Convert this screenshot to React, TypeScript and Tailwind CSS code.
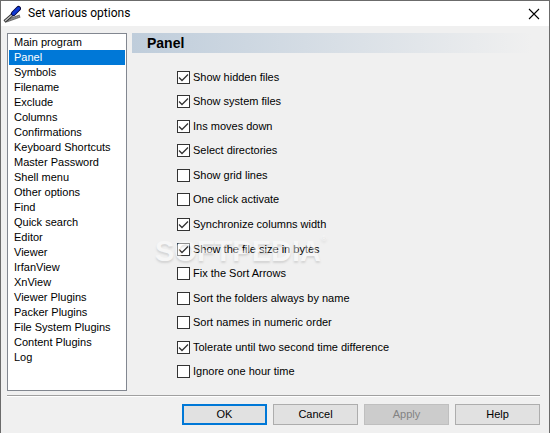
import { useState } from "react";

const PAGES = [
    "Main program",
    "Panel",
    "Symbols",
    "Filename",
    "Exclude",
    "Columns",
    "Confirmations",
    "Keyboard Shortcuts",
    "Master Password",
    "Shell menu",
    "Other options",
    "Find",
    "Quick search",
    "Editor",
    "Viewer",
    "IrfanView",
    "XnView",
    "Viewer Plugins",
    "Packer Plugins",
    "File System Plugins",
    "Content Plugins",
    "Log",
];

const OPTIONS = [
    { label: "Show hidden files", checked: true },
    { label: "Show system files", checked: true },
    { label: "Ins moves down", checked: true },
    { label: "Select directories", checked: true },
    { label: "Show grid lines", checked: false },
    { label: "One click activate", checked: false },
    { label: "Synchronize columns width", checked: true },
    { label: "Show the file size in bytes", checked: true },
    { label: "Fix the Sort Arrows", checked: false },
    { label: "Sort the folders always by name", checked: false },
    { label: "Sort names in numeric order", checked: false },
    { label: "Tolerate until two second time difference", checked: true },
    { label: "Ignore one hour time", checked: false },
];

const BUTTON = "h-[21px] w-[85px] text-center leading-none";

function AppIcon() {
    return (
        <svg className="h-[18px] w-[18px]" viewBox="0 0 18 18" aria-hidden="true">
            <path d="M3 16 L10 13.5 L17 11" fill="none" stroke="#707070" strokeWidth="3" />
            <path d="M4 16 L10 13.5 L16 11.5" fill="none" stroke="#a8a8a8" strokeWidth="1" strokeDasharray="1 1" />
            <path d="M1.5 16.5 L9 10" stroke="#303030" strokeWidth="3" />
            <path d="M2 16 L9 10" stroke="#c8c8c8" strokeWidth="1.2" />
            <path d="M10.5 8.5 L15.5 3.5" stroke="#000038" strokeWidth="5" strokeLinecap="round" />
            <path d="M10.5 8.5 L15.5 3.5" stroke="#1038d0" strokeWidth="3.2" strokeLinecap="round" />
        </svg>
    );
}

function Option({ label, defaultChecked }: { label: string; defaultChecked: boolean }) {
    return (
        <label className="flex items-center gap-[3px]">
            <span className="relative h-[13px] w-[13px]">
                <input
                    type="checkbox"
                    defaultChecked={defaultChecked}
                    className="peer block h-[13px] w-[13px] appearance-none border border-[#333333] bg-white"
                />
                <svg
                    className="pointer-events-none absolute inset-0 hidden h-[13px] w-[13px] peer-checked:block"
                    viewBox="0 0 13 13"
                    aria-hidden="true"
                >
                    <path d="M2 6.5 L5 9.5 L11 3.5" fill="none" stroke="#333333" strokeWidth="1.3" />
                </svg>
            </span>
            {label}
        </label>
    );
}

export default function App() {
    const [page, setPage] = useState("Panel");

    return (
        <div className="flex min-h-screen flex-col border border-[#6b6b6b] bg-[#f0f0f0] font-['Liberation_Sans',Arial,sans-serif] text-[11px] leading-[15px] text-black">
            <header className="flex h-[25px] items-center bg-white pr-[9px] pl-[2px]">
                <AppIcon />
                <h1 className="ml-[7px] flex-1 font-[Roboto,'Noto_Sans',sans-serif] text-[12px]">Set various options</h1>
                <button type="button" aria-label="Close">
                    <svg className="h-3 w-3" viewBox="0 0 12 12" aria-hidden="true">
                        <path d="M1 1 L11 11 M11 1 L1 11" stroke="#000" strokeWidth="1.1" />
                    </svg>
                </button>
            </header>

            <main className="flex flex-1 gap-[5px] pt-[7px] pr-[17px] pl-[6px]">
                <nav className="w-[120px] border border-[#828790] bg-white p-px pb-[25px]">
                    {PAGES.map((name) => (
                        <button
                            key={name}
                            type="button"
                            onClick={() => setPage(name)}
                            className={`block w-full pl-[5px] text-left ${page === name ? "bg-[#0078d7] text-white" : ""}`}
                        >
                            {name}
                        </button>
                    ))}
                </nav>

                <section className="flex flex-1 flex-col">
                    <h2 className="h-5 bg-linear-to-r from-[#bfcddb] to-[#f0f0f0] pl-[15px] text-[14px] leading-5 font-bold">
                        Panel
                    </h2>
                    <div className="relative mt-3 mb-[7px] ml-[45px] grid flex-1 auto-rows-fr">
                        {OPTIONS.map((option) => (
                            <Option key={option.label} label={option.label} defaultChecked={option.checked} />
                        ))}
                        <div className="pointer-events-none absolute top-[170px] -left-[22px] flex text-white opacity-45 [text-shadow:0_2px_2px_rgb(0_0_0/0.25)]">
                            <span className="text-[29px] leading-8 font-bold">SOFTPEDIA</span>
                            <span className="text-[8px] leading-2">®</span>
                        </div>
                    </div>
                </section>
            </main>

            <footer className="mt-1 mr-[9px] mb-2 ml-[6px] flex justify-end gap-[6px] border-t border-[#a0a0a0] pt-2 shadow-[inset_0_1px_0_white]">
                <button type="button" className={`${BUTTON} border-2 border-[#0078d7] bg-[#e1e1e1]`}>
                    OK
                </button>
                <button type="button" className={`${BUTTON} border border-[#adadad] bg-[#e1e1e1]`}>
                    Cancel
                </button>
                <button type="button" disabled className={`${BUTTON} border border-[#bfbfbf] bg-[#cccccc] text-[#838383]`}>
                    Apply
                </button>
                <button type="button" className={`${BUTTON} border border-[#adadad] bg-[#e1e1e1]`}>
                    Help
                </button>
            </footer>
        </div>
    );
}
